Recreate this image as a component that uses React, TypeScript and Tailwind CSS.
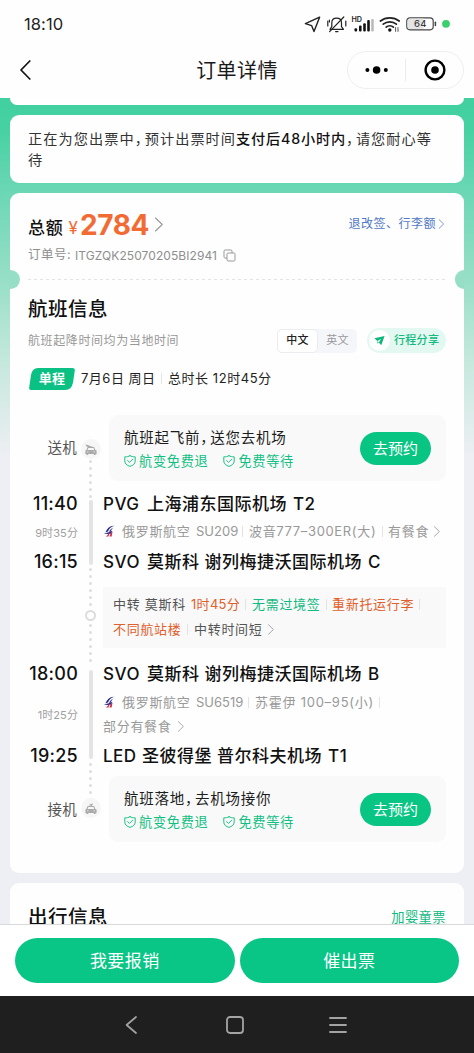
import type { ReactNode } from "react";

function Chevron({ className }: { className: string }) {
  return (
    <svg viewBox="0 0 8 12" fill="none" stroke="currentColor" className={className}>
      <path d="M1.2 0.8 L6.6 6 L1.2 11.2" strokeWidth="0.9" strokeLinecap="round" strokeLinejoin="round" />
    </svg>
  );
}

function Sep({ className }: { className: string }) {
  return <span className={`h-[11px] w-px shrink-0 bg-[#e3e3e3] ${className}`} />;
}

function Comma() {
  return <span className="inline-block w-[10px] tracking-normal [font-feature-settings:'halt']">，</span>;
}

function Shield() {
  return (
    <svg viewBox="0 0 12 12" fill="none" stroke="#12bf83" strokeWidth="0.95" strokeLinejoin="round" strokeLinecap="round" className="-mt-[2px] h-[12px] w-[12px] shrink-0">
      <path d="M6 0.7 C7.4 1.6 9 1.9 11.2 1.8 V6 C11.2 8.8 9 10.4 6 11.4 C3 10.4 0.8 8.8 0.8 6 V1.8 C3 1.9 4.6 1.6 6 0.7 Z" />
      <path d="M3.6 5.5 L5.5 7.4 L8.7 4.2" />
    </svg>
  );
}

function AirlineLogo() {
  return (
    <svg viewBox="0 0 12 13" className="h-[13px] w-[12px] shrink-0">
      <path d="M11.2 0.8 C8 0.8 5.4 2.2 4 4.6 L2.4 7.2 L5 6.4 C5.6 4 8 2 11.2 0.8 Z" fill="#26288a" />
      <path d="M10.6 2.6 C8.4 3.4 6.8 4.8 6 7 L8 6.6 C8.2 5 9.2 3.6 10.6 2.6 Z" fill="#34359a" />
      <path d="M0.8 8.2 C3.6 8.2 6.6 7.4 9.2 5.8 L8.2 8.6 C6 9 3 9.2 0.8 8.2 Z" fill="#26288a" />
      <path d="M9.6 6.6 L8.6 11.6 H6.4 C7.2 10 7.6 8.6 7.4 8 Z" fill="#c8304c" />
      <path d="M6.6 8.8 L5.4 11.6 H2.6 C4 11 4.8 10 5 9 Z" fill="#c8304c" />
    </svg>
  );
}

function TaxiIcon({ variant }: { variant: "departure" | "arrival" }) {
  return (
    <svg viewBox="0 0 14 13" className="h-[13px] w-[14px]">
      {variant === "departure" ? (
        <path d="M1.6 1.4 L3 1.8 L7.6 3.4 L10.2 4.4 L9.6 5.2 L5.4 4.6 L2.2 3.2 Z" fill="#aaa" />
      ) : (
        <path d="M5 2.8 L8.6 1.6 L9 2.4 L7.8 3.2 V4.2 H6.6 V3.2 L5.2 3.6 Z" fill="#aaa" />
      )}
      <path d="M3.6 4 H10 L11.4 7 L12.6 7.6 V11 H11.6 V12 H9.8 V11 H4.2 V12 H2.4 V11 H1.4 V7.6 L2.4 7 Z" fill="#aaa" />
      <path d="M4.4 5 H9.4 L10.2 6.9 H3.6 Z" fill="#f6f6f6" />
      <path d="M3 8.4 H4.6 V9.3 H3 Z M9.4 8.4 H11 V9.3 H9.4 Z" fill="#eee" />
    </svg>
  );
}

function TaxiBadge({ variant }: { variant: "departure" | "arrival" }) {
  return (
    <div className="flex h-[20px] w-[20px] items-center justify-center rounded-full bg-[#f6f6f6]">
      <TaxiIcon variant={variant} />
    </div>
  );
}

function Dots({ count, className }: { count: number; className: string }) {
  return (
    <div className={`flex flex-col items-center gap-[4px] ${className}`}>
      {Array.from({ length: count }, (_, i) => (
        <span key={i} className="h-[3px] w-[3px] rounded-full bg-[#dedede]" />
      ))}
    </div>
  );
}

function StatusIcons() {
  return (
    <svg viewBox="0 0 150 20" className="h-[20px] w-[150px]" fill="none" strokeLinecap="round" strokeLinejoin="round">
      <path d="M19.6 3.2 L5.4 9.6 L11.6 11.6 L14 17.6 Z" stroke="#222" strokeWidth="1.4" />
      <g stroke="#222" strokeWidth="1.2">
        <path d="M30 15.3 H43.5 L41.5 12.6 V9 C41.5 6 39.6 4.2 36.6 4.2 C33.6 4.2 31.8 6 31.8 9 V12.6 Z" />
        <path d="M35.6 17.6 H38" />
        <path d="M29.6 17.6 L43.8 3" />
        <path d="M27.8 7 V12 M45.8 7 V12" />
        <path d="M29.4 6 V8" />
      </g>
      <text x="51.4" y="7.6" fontSize="7.2" fontWeight="600" fill="#222" fontFamily="Inter, sans-serif">HD</text>
      <g fill="#111">
        <rect x="54.5" y="14.2" width="2.6" height="3.2" rx="1" />
        <rect x="59" y="11.6" width="2.6" height="5.8" rx="1" />
        <rect x="63.2" y="9.2" width="2.6" height="8.2" rx="1" />
        <rect x="67.2" y="6" width="2.6" height="11.4" rx="1" />
        <rect x="71.2" y="5" width="2.6" height="12.4" rx="1" fill="#bbb" />
      </g>
      <g stroke="#222" strokeWidth="1.7">
        <path d="M80.4 7 C85.6 2.8 94 2.8 99.2 7" />
        <path d="M83.2 10.2 C87 7 92.6 7 96.4 10.2" />
        <path d="M86.2 13.2 C88.2 11.4 91.4 11.4 93.4 13.2" />
      </g>
      <circle cx="89.8" cy="16" r="1.7" fill="#111" />
      <path d="M95.6 13.6 V17.4 M98 13.6 V17.4" stroke="#555" strokeWidth="1" />
      <rect x="106.8" y="3.8" width="26.4" height="12" rx="3.2" stroke="#444" strokeWidth="1.2" fill="#fff" />
      <path d="M110 4.6 H123.5 V15 H110 C108.4 15 107.5 14.1 107.5 12.6 V7 C107.5 5.5 108.4 4.6 110 4.6 Z" fill="#e4e4e4" />
      <path d="M135.4 8.2 V11.4" stroke="#444" strokeWidth="1.5" />
      <text x="120.4" y="13.3" fontSize="9.6" textAnchor="middle" fill="#222" letterSpacing="0.4" fontFamily="Inter, sans-serif">64</text>
      <circle cx="146" cy="9.8" r="3.9" fill="#38cf6c" />
    </svg>
  );
}

function TransferCard({ title }: { title: ReactNode }) {
  return (
    <div className="ml-[6px] flex h-[66px] items-center rounded-[9px] bg-[#f9f9f9] pr-[15px] pl-[15px]">
      <div className="flex flex-1 flex-col">
        <div className="flex h-[28px] items-center pt-[4px] text-[14.5px] leading-none tracking-[0.75px] text-[#1c1c1c]">{title}</div>
        <div className="flex h-[24px] items-center text-[13.2px] leading-none tracking-[0.7px] text-[#12bf83]">
          <Shield />
          <span className="ml-[3px]">航变免费退</span>
          <span className="w-[15px]" />
          <Shield />
          <span className="ml-[3px]">免费等待</span>
        </div>
      </div>
      <button className="h-[33px] w-[71px] rounded-full bg-[#08c584] text-[15px] leading-none text-white">去预约</button>
    </div>
  );
}

function Airport({ code, codeWidth, name, tail }: { code: string; codeWidth: string; name: string; tail: string }) {
  return (
    <div className="flex h-[24px] items-center text-[17px] leading-none font-medium tracking-[0.5px] text-[#111]">
      <span className={`shrink-0 ${codeWidth}`}>{code}</span>
      <span>{name}</span>
      <span className="ml-[6px]">{tail}</span>
    </div>
  );
}

function Time({ children, className = "" }: { children: ReactNode; className?: string }) {
  return <div className={`flex h-[24px] items-center justify-end text-[18px] leading-none font-medium tracking-[0.25px] text-[#111] ${className}`}>{children}</div>;
}

function Duration({ children, className }: { children: ReactNode; className: string }) {
  return <div className={`flex items-center justify-end text-[11px] leading-none tracking-[0.1px] text-[#a0a0a0] ${className}`}>{children}</div>;
}

export default function App() {
  return (
    <div className="flex h-[1053px] w-[474px] flex-col overflow-hidden bg-white font-['Inter','Noto_Sans_CJK_SC',sans-serif] whitespace-nowrap text-[#1a1a1a]">
      <header className="flex h-[98px] shrink-0 flex-col bg-[#fefefe]">
        <div className="flex h-[47px] items-center justify-between pr-[24px] pl-[24px]">
          <span className="pt-px text-[16.5px] leading-none tracking-[0.1px] text-[#222]">18:10</span>
          <StatusIcons />
        </div>
        <div className="grid h-[46px] grid-cols-[1fr_auto_1fr] items-center">
          <svg viewBox="0 0 12 20" fill="none" stroke="#111" strokeWidth="1.7" strokeLinecap="round" strokeLinejoin="round" className="ml-[19px] h-[20px] w-[12px]">
            <path d="M10.8 1 L2 10 L10.8 19" />
          </svg>
          <h1 className="pt-px text-[20px] leading-none tracking-[0.4px] text-[#1a1a1a]">订单详情</h1>
          <div className="mr-[10px] flex h-[38px] w-[117px] items-center justify-self-end rounded-full border border-[#efefef]">
            <svg viewBox="0 0 24 10" fill="#000" className="ml-[17px] h-[10px] w-[24px]">
              <circle cx="2.4" cy="5" r="2" />
              <circle cx="11.6" cy="5" r="3.8" />
              <circle cx="20.8" cy="5" r="2" />
            </svg>
            <span className="ml-[16px] h-[22px] w-px bg-[#ececec]" />
            <svg viewBox="0 0 22 22" className="ml-[18px] h-[22px] w-[22px]">
              <circle cx="11" cy="11" r="9.4" fill="none" stroke="#000" strokeWidth="2.4" />
              <circle cx="11" cy="11" r="3.8" />
            </svg>
          </div>
        </div>
      </header>

      <main className="flex h-[826px] shrink-0 flex-col overflow-hidden bg-[#eeeff4] bg-[linear-gradient(180deg,#42d0a0_0px,#46d1a2_30px,#6ad7b4_92px,#97dfc7_182px,#c6e8dd_265px,#eeeff4_360px)] px-[10px]">
        <section className="h-[7px] shrink-0 rounded-b-[10px] bg-white" />

        <section className="mt-[10px] h-[67.5px] shrink-0 rounded-[9px] bg-[#fefefe] pt-[13px] pl-[18px] text-[14.2px] leading-[21px] tracking-[1.05px] text-[#333]">
          <p>
            正在为您出票中<Comma />预计出票时间<b className="font-medium tracking-[0.8px] text-[#111]">支付后48小时内</b><Comma />请您耐心等
          </p>
          <p>待</p>
        </section>

        <section className="relative mt-[10px] flex h-[680.5px] shrink-0 flex-col rounded-[9px] bg-[#fefefe]">
          <div className="absolute top-[77.5px] left-0 h-[19px] w-[9.5px] rounded-r-full bg-[#96dfc6]" />
          <div className="absolute top-[77.5px] right-0 h-[19px] w-[9.5px] rounded-l-full bg-[#96dfc6]" />

          <div className="flex h-[50px] items-center pt-[13px] pr-[19px] pl-[18px] leading-none">
            <span className="pt-[8px] text-[17px] font-medium tracking-[0.8px] text-[#111]">总额</span>
            <span className="ml-[5px] pt-[8px] text-[17px] text-[#f26b35]">¥</span>
            <span className="ml-[2px] pt-px text-[28px] font-bold tracking-[-0.4px] text-[#f26b35]">2784</span>
            <Chevron className="ml-[5px] h-[15px] w-[10px] text-[#999]" />
            <a className="ml-auto flex items-center text-[12px] tracking-[0.5px] text-[#5078c4]">
              退改签、行李额
              <Chevron className="ml-[2px] h-[10px] w-[7px]" />
            </a>
          </div>

          <div className="flex h-[25px] items-center pt-px pl-[18px] text-[12.5px] leading-none text-[#8e8e8e]">
            <span className="w-[47px] tracking-[0.5px]">订单号:</span>
            <span className="text-[12px] tracking-[0.08px]">ITGZQK25070205BI2941</span>
            <svg viewBox="0 0 13 13" fill="none" stroke="#999" strokeWidth="1" className="ml-[6px] h-[13px] w-[13px]">
              <rect x="4" y="4" width="8" height="8" rx="1.2" />
              <path d="M9 4 V2.2 C9 1.4 8.6 1 7.8 1 H2.2 C1.4 1 1 1.4 1 2.2 V7.8 C1 8.6 1.4 9 2.2 9 H4" />
            </svg>
          </div>

          <div className="mx-[18px] mt-[11px] h-px bg-[repeating-linear-gradient(90deg,#e4e4e4_0px,#e4e4e4_3px,transparent_3px,transparent_6px)]" />

          <h2 className="mt-[16px] flex h-[26px] items-center pt-[2px] pl-[18px] text-[19.5px] leading-none font-medium tracking-[0.5px] text-[#111]">航班信息</h2>

          <div className="mt-[6px] flex h-[26px] items-center pr-[18px] pl-[18px] leading-none">
            <span className="text-[12px] tracking-[0.6px] text-[#999]">航班起降时间均为当地时间</span>
            <div className="ml-auto flex h-[24px] w-[80px] items-center rounded-[5px] bg-[#f5f6fa] text-[11px] tracking-[0.2px]">
              <span className="flex h-[24px] w-[41px] items-center justify-center rounded-[5px] border border-[#ececf0] bg-white font-medium text-[#222]">中文</span>
              <span className="flex flex-1 items-center justify-center text-[#999]">英文</span>
            </div>
            <div className="ml-[10px] flex h-[25px] w-[79px] items-center rounded-full bg-[#e3f8f0] pl-[2px]">
              <span className="flex h-[21px] w-[21px] items-center justify-center rounded-full bg-white">
                <svg viewBox="0 0 10 10" className="h-[11px] w-[11px]">
                  <path d="M9.6 0.8 L0.4 3 L3 5.4 L6.4 3.6 L4.4 6.8 L6.6 9.4 Z" fill="#0db67a" />
                  <path d="M3 5.4 L4.4 6.8 L3.2 8 Z" fill="#0db67a" />
                </svg>
              </span>
              <span className="ml-[4px] text-[11px] font-medium tracking-[0.3px] text-[#12ba80]">行程分享</span>
            </div>
          </div>

          <div className="mt-[12px] flex h-[26px] items-center pl-[19px] text-[13px] leading-none text-[#222]">
            <span className="relative flex h-[22px] w-[46px] items-center justify-center">
              <svg viewBox="0 0 46 22" className="absolute inset-0 h-[22px] w-[46px]">
                <path d="M9 0 H43.5 Q46.2 0 45.8 2.6 L44 14.5 Q42.6 22 36.5 22 H2.5 Q-0.3 22 0.2 19.4 L2 7 Q3.4 0 9 0 Z" fill="#0ac082" />
              </svg>
              <span className="relative font-bold tracking-[0.3px] text-white">单程</span>
            </span>
            <span className="ml-[6px] w-[80px] tracking-[0.5px]">7月6日 周日</span>
            <Sep className="mr-[6px]" />
            <span className="tracking-[0.55px]">总时长 12时45分</span>
          </div>

          <div className="mt-[23.5px] flex h-[428px] pr-[18px]">
            <div className="flex w-[68px] shrink-0 flex-col">
              <div className="flex h-[66px] items-center justify-end pt-px pr-[1px] text-[14.5px] leading-none tracking-[0.3px] text-[#555]">送机</div>
              <Time className="mt-[11px]">11:40</Time>
              <Duration className="h-[34px]">9时35分</Duration>
              <Time>16:15</Time>
              <Time className="mt-[88px]">18:00</Time>
              <Duration className="h-[58px]">1时25分</Duration>
              <Time>19:25</Time>
              <div className="mt-[9px] flex h-[66px] items-center justify-end pr-[1px] text-[14.5px] leading-none tracking-[0.3px] text-[#555]">接机</div>
            </div>

            <div className="flex w-[25px] shrink-0 flex-col items-center">
              <div className="mt-[24px]">
                <TaxiBadge variant="departure" />
              </div>
              <Dots count={6} className="mt-[1px]" />
              <div className="mt-[2px] h-[65px] w-[4px] rounded-full bg-[#e4e4e4]" />
              <Dots count={6} className="mt-[3px]" />
              <div className="mt-[4px] h-[11px] w-[11px] rounded-full border-2 border-[#dcdcdc] bg-white" />
              <Dots count={6} className="mt-[3px]" />
              <div className="mt-[8px] h-[89px] w-[4px] rounded-full bg-[#e4e4e4]" />
              <Dots count={5} className="mt-[4px]" />
              <div className="mt-[4px]">
                <TaxiBadge variant="arrival" />
              </div>
            </div>

            <div className="flex min-w-0 flex-1 flex-col">
              <TransferCard title={<span>航班起飞前<Comma />送您去机场</span>} />
              <div className="mt-[11px]">
                <Airport code="PVG" codeWidth="w-[44px]" name="上海浦东国际机场" tail="T2" />
              </div>
              <div className="mb-[3px] flex h-[31px] items-center text-[13px] leading-none tracking-[0.7px] text-[#999]">
                <AirlineLogo />
                <span className="ml-[7px] w-[74px] shrink-0">俄罗斯航空</span>
                <span className="w-[46px] shrink-0 tracking-[0px]">SU209</span>
                <Sep className="mr-[6px]" />
                <span className="w-[133px] shrink-0 tracking-[0.65px]">波音777–300ER(大)</span>
                <Sep className="mr-[5px]" />
                <span>有餐食</span>
                <Chevron className="ml-[4px] h-[11px] w-[8px] shrink-0" />
              </div>
              <Airport code="SVO" codeWidth="w-[44px]" name="莫斯科 谢列梅捷沃国际机场" tail="C" />

              <div className="mt-[13px] flex h-[61px] flex-col justify-center bg-[#f9f9f9] pb-[2px] pl-[10px] text-[13px] leading-none tracking-[0.7px] text-[#555]">
                <div className="flex h-[25px] items-center">
                  <span className="w-[78px]">中转 莫斯科</span>
                  <span className="w-[54px] tracking-[0.3px] text-[#e0602c]">1时45分</span>
                  <Sep className="mr-[6px]" />
                  <span className="w-[74px] text-[#12b981]">无需过境签</span>
                  <Sep className="mr-[5px]" />
                  <span className="w-[87px] text-[#e0602c]">重新托运行李</span>
                  <Sep className="" />
                </div>
                <div className="flex h-[25px] items-center">
                  <span className="w-[74px] text-[#e0602c]">不同航站楼</span>
                  <Sep className="mr-[6px]" />
                  <span>中转时间短</span>
                  <Chevron className="ml-[4px] h-[11px] w-[8px] text-[#999]" />
                </div>
              </div>

              <div className="mt-[14px]">
                <Airport code="SVO" codeWidth="w-[44px]" name="莫斯科 谢列梅捷沃国际机场" tail="B" />
              </div>
              <div className="mt-[4px] flex h-[25px] items-center text-[13px] leading-none tracking-[0.7px] text-[#999]">
                <AirlineLogo />
                <span className="ml-[7px] w-[74px] shrink-0">俄罗斯航空</span>
                <span className="w-[52px] shrink-0 tracking-[0px]">SU6519</span>
                <Sep className="mr-[6px]" />
                <span className="w-[124px] shrink-0 tracking-[0.75px]">苏霍伊 100–95(小)</span>
                <Sep className="" />
              </div>
              <div className="flex h-[23px] items-center text-[13px] leading-none tracking-[0.7px] text-[#999]">
                部分有餐食
                <Chevron className="ml-[5px] h-[11px] w-[8px]" />
              </div>
              <div className="mt-[6px]">
                <Airport code="LED" codeWidth="w-[39px]" name="圣彼得堡 普尔科夫机场" tail="T1" />
              </div>
              <div className="mt-[8px]">
                <TransferCard title={<span>航班落地<Comma />去机场接你</span>} />
              </div>
            </div>
          </div>
        </section>

        <section className="mt-[10px] flex h-[120px] shrink-0 items-start justify-between rounded-[9px] bg-[#fefefe] px-[18px] pt-[25px] leading-none">
          <h2 className="text-[19.5px] leading-none font-medium tracking-[0.5px] text-[#111]">出行信息</h2>
          <a className="pt-[3px] text-[13.3px] tracking-[0.4px] text-[#12b981]">加婴童票</a>
        </section>
      </main>

      <footer className="flex h-[72px] shrink-0 items-start gap-[5px] border-t border-[#d9d9dc] bg-white px-[15px] pt-[13px] text-[17px] leading-none tracking-[0.4px] text-white">
        <button className="h-[45px] flex-1 rounded-full bg-[#09c586] pt-px">我要报销</button>
        <button className="h-[45px] flex-1 rounded-full bg-[#09c586] pt-px">催出票</button>
      </footer>

      <nav className="flex h-[57px] shrink-0 items-center bg-[#1f1f1f] pl-[125px]">
        <svg viewBox="0 0 12 18" fill="none" stroke="#a3a3a3" strokeWidth="1.7" strokeLinecap="round" strokeLinejoin="round" className="h-[18px] w-[12px]">
          <path d="M11 1 L1.6 9 L11 17" />
        </svg>
        <svg viewBox="0 0 18 18" fill="none" stroke="#a3a3a3" strokeWidth="1.8" className="ml-[89px] h-[18px] w-[18px]">
          <rect x="1" y="1" width="16" height="16" rx="3" />
        </svg>
        <svg viewBox="0 0 18 18" fill="none" stroke="#a3a3a3" strokeWidth="1.8" strokeLinecap="round" className="ml-[85px] h-[18px] w-[18px]">
          <path d="M1 2 H17 M1 9 H17 M1 16 H17" />
        </svg>
      </nav>
    </div>
  );
}
